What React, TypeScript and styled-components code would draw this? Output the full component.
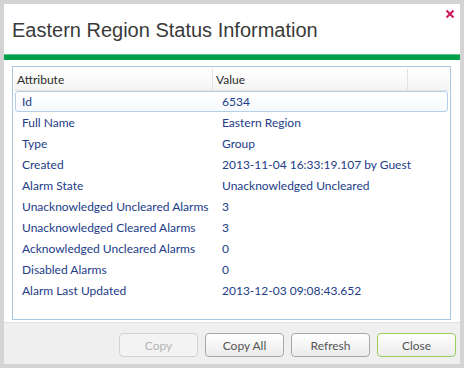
import React from 'react';
import styled, { createGlobalStyle } from 'styled-components';

const GlobalStyle = createGlobalStyle`
  html, body {
    margin: 0;
    padding: 0;
    background: #d4d4d4;
  }
`;

const Dialog = styled.div`
  position: relative;
  margin: 4px;
  width: 456px;
  height: 360px;
  background: #ffffff;
  display: flex;
  flex-direction: column;
  font-family: Lato, 'Open Sans', sans-serif;
`;

const TitleBar = styled.div`
  height: 50px;
  display: flex;
  align-items: center;
  padding: 3px 0 0 8px;
  box-sizing: border-box;
`;

const Title = styled.h1`
  margin: 0;
  font-family: 'Liberation Sans', Arial, sans-serif;
  font-weight: normal;
  font-size: 20px;
  color: #3a3a3a;
`;

const CloseX = styled.button`
  position: absolute;
  top: 2px;
  right: 2px;
  width: 16px;
  height: 16px;
  padding: 0;
  border: 0;
  background: transparent;
  display: flex;
  align-items: center;
  justify-content: center;
`;

const GreenBar = styled.div`
  height: 6px;
  background: #03a04a;
  border-top: 1px solid #5cc48a;
  box-sizing: border-box;
`;

const Body = styled.div`
  flex: 1;
  padding: 6px 9px 2px 8px;
  display: flex;
`;

const Grid = styled.div`
  flex: 1;
  border: 1px solid #a9c6e2;
  display: flex;
  flex-direction: column;
  padding: 2px 1px 0 1px;
`;

const HeaderRow = styled.div`
  display: grid;
  grid-template-columns: 199px 195px 1fr;
  height: 21px;
  background: linear-gradient(#ffffff, #f4f4f4);
  border-bottom: 1px solid #e4e4e4;
`;

const HeaderCell = styled.div`
  font-size: 12px;
  color: #2b2b2b;
  line-height: 21px;
  padding-left: 3px;
  border-right: 1px solid #e2e2e2;
  &:last-child {
    border-right: 0;
  }
`;

const Row = styled.div<{ $selected?: boolean }>`
  display: grid;
  grid-template-columns: 200px 1fr;
  height: 21px;
  margin: 0 1px;
  border: 1px solid ${p => (p.$selected ? '#b4cfe9' : 'transparent')};
  border-radius: 3px;
  box-sizing: border-box;
  background: ${p => (p.$selected ? 'linear-gradient(#ffffff, #f6f9fd)' : 'transparent')};
`;

const Cell = styled.div`
  font-size: 12px;
  color: #233c88;
  line-height: 19px;
  padding-left: 6px;
  white-space: nowrap;
`;

const Footer = styled.div`
  height: 42px;
  background: #efefef;
  border-top: 1px solid #e0e0e0;
  box-sizing: border-box;
  display: flex;
  justify-content: flex-end;
  align-items: flex-start;
  gap: 7px;
  padding: 10px 4px 0 0;
`;

const Button = styled.button<{ $primary?: boolean }>`
  width: 79px;
  height: 24px;
  border-radius: 4px;
  border: 1px solid ${p => (p.$primary ? '#9bcf5c' : '#a8a8a8')};
  background: linear-gradient(#ffffff, #ebebeb);
  font-family: Lato, 'Open Sans', sans-serif;
  font-size: 12px;
  color: #555555;
  padding: 0;
  &:disabled {
    color: #b4b4b4;
    border-color: #d2d2d2;
    background: #f3f3f3;
  }
`;

const rows: [string, string][] = [
  ['Id', '6534'],
  ['Full Name', 'Eastern Region'],
  ['Type', 'Group'],
  ['Created', '2013-11-04 16:33:19.107 by Guest'],
  ['Alarm State', 'Unacknowledged Uncleared'],
  ['Unacknowledged Uncleared Alarms', '3'],
  ['Unacknowledged Cleared Alarms', '3'],
  ['Acknowledged Uncleared Alarms', '0'],
  ['Disabled Alarms', '0'],
  ['Alarm Last Updated', '2013-12-03 09:08:43.652'],
];

export default function App() {
  return (
    <>
      <GlobalStyle />
      <Dialog>
        <TitleBar>
          <Title>Eastern Region Status Information</Title>
        </TitleBar>
        <CloseX aria-label="Close">
          <svg width="10" height="10" viewBox="0 0 10 10">
            <path d="M1.5 1.5 L8.5 8.5 M8.5 1.5 L1.5 8.5" stroke="#cf1459" strokeWidth="2" />
          </svg>
        </CloseX>
        <GreenBar />
        <Body>
          <Grid>
            <HeaderRow>
              <HeaderCell>Attribute</HeaderCell>
              <HeaderCell>Value</HeaderCell>
              <HeaderCell />
            </HeaderRow>
            {rows.map(([k, v], i) => (
              <Row key={k} $selected={i === 0}>
                <Cell>{k}</Cell>
                <Cell>{v}</Cell>
              </Row>
            ))}
          </Grid>
        </Body>
        <Footer>
          <Button disabled>Copy</Button>
          <Button>Copy All</Button>
          <Button>Refresh</Button>
          <Button $primary>Close</Button>
        </Footer>
      </Dialog>
    </>
  );
}
